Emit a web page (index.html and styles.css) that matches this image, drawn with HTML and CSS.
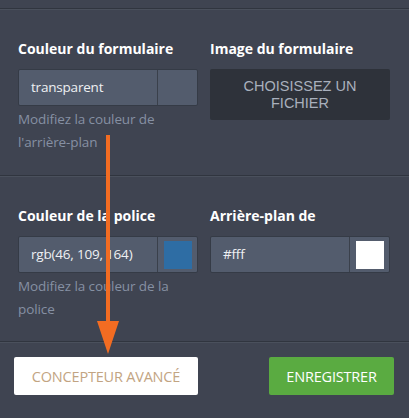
FILE: index.html
```html
<!DOCTYPE html>
<html lang="fr">
<head>
<meta charset="utf-8">
<link rel="stylesheet" href="styles.css">
</head>
<body>
<div class="panel">
  <div class="topbar"></div>
  <section class="section first">
    <div class="col">
      <div class="label">Couleur du formulaire</div>
      <div class="field">
        <span class="value">transparent</span>
        <span class="swatch-cell"></span>
      </div>
      <div class="help">Modifiez la couleur de l'arrière-plan</div>
    </div>
    <div class="col">
      <div class="label">Image du formulaire</div>
      <button class="file-btn"><span class="line">CHOISISSEZ UN</span><span class="line">FICHIER</span></button>
    </div>
  </section>
  <section class="section second">
    <div class="col">
      <div class="label">Couleur de la police</div>
      <div class="field">
        <span class="value">rgb(46, 109, 164)</span>
        <span class="swatch-cell"><span class="swatch blue"></span></span>
      </div>
      <div class="help">Modifiez la couleur de la police</div>
    </div>
    <div class="col">
      <div class="label">Arrière-plan de</div>
      <div class="field">
        <span class="value">#fff</span>
        <span class="swatch-cell"><span class="swatch white"></span></span>
      </div>
    </div>
  </section>
  <footer class="footer">
    <button class="btn-advanced">CONCEPTEUR AVANCÉ</button>
    <button class="btn-save">ENREGISTRER</button>
  </footer>
  <svg class="arrow" width="409" height="418" viewBox="0 0 409 418">
    <rect x="106" y="135" width="4" height="192" fill="#f26c22"/>
    <polygon points="97,321 119,321 108,354" fill="#f26c22"/>
  </svg>
</div>
</body>
</html>
```
FILE: styles.css
```css
* { box-sizing: border-box; }
html, body { margin: 0; padding: 0; }
body {
  background: #3f4451;
  font-family: "Open Sans", "Liberation Sans", sans-serif;
  width: 409px;
  height: 418px;
  overflow: hidden;
}
.panel { position: relative; width: 409px; height: 418px; }
.topbar {
  height: 9px;
  border-bottom: 1px solid #30353f;
  box-shadow: 0 1px 0 #4a505c;
}
.section {
  display: grid;
  grid-template-columns: 180px 180px;
  column-gap: 12px;
  padding: 31px 18px 0 18px;
  border-bottom: 1px solid #30353f;
  box-shadow: 0 1px 0 #4a505c;
}
.section.first { height: 167px; }
.section.second { height: 166px; }
.label {
  color: #ffffff;
  font-weight: 700;
  font-size: 14px;
  line-height: 18px;
  height: 18px;
  margin-bottom: 11px;
}
.field {
  display: flex;
  height: 37px;
  background: #535c6d;
  border: 1px solid #353b46;
  border-radius: 2px;
}
.value {
  flex: 1;
  color: #eef0f3;
  font-size: 13.5px;
  line-height: 35px;
  padding-left: 12px;
  letter-spacing: -0.2px;
}
.swatch-cell {
  width: 40px;
  border-left: 1px solid #3a404b;
  display: flex;
  align-items: center;
  justify-content: center;
}
.swatch { width: 28px; height: 28px; display: block; }
.swatch.blue { background: #2e6da4; }
.swatch.white { background: #ffffff; }
.help {
  color: #8690a3;
  font-size: 13.5px;
  line-height: 23px;
  margin-top: 2px;
  letter-spacing: -0.1px;
}
.file-btn {
  width: 180px;
  height: 51px;
  background: #2e323a;
  border: none;
  border-radius: 2px;
  color: #a9b0bd;
  font-family: "Liberation Sans", Arial, sans-serif;
  font-size: 14.5px;
  padding: 0;
  display: flex;
  flex-direction: column;
  align-items: center;
  justify-content: center;
}
.file-btn .line { display: block; line-height: 16.5px; height: 16.5px; }
.footer {
  display: flex;
  justify-content: space-between;
  align-items: flex-start;
  padding: 15px 15px 0 14px;
}
.btn-advanced, .btn-save {
  height: 38px;
  border: none;
  border-radius: 2px;
  font-family: inherit;
  font-size: 14.5px;
  letter-spacing: -0.2px;
  padding: 0;
}
.btn-advanced {
  width: 184px;
  background: #ffffff;
  color: #c2a482;
}
.btn-save {
  width: 125px;
  background: #5aab41;
  color: #ffffff;
}
.arrow { position: absolute; left: 0; top: 0; pointer-events: none; }
```
